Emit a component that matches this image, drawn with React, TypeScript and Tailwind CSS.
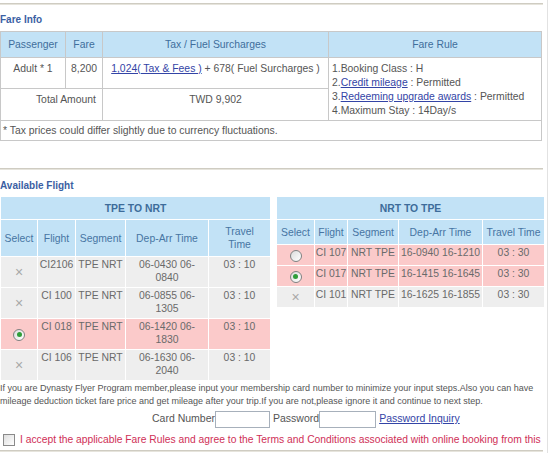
import React from 'react';

type Flight = {
  sel: 'x' | 'on' | 'off';
  flight: string;
  seg: string;
  time: string[];
  travel: string;
};

const outbound: Flight[] = [
  { sel: 'x', flight: 'CI2106', seg: 'TPE NRT', time: ['06-0430 06-', '0840'], travel: '03 : 10' },
  { sel: 'x', flight: 'CI 100', seg: 'TPE NRT', time: ['06-0855 06-', '1305'], travel: '03 : 10' },
  { sel: 'on', flight: 'CI 018', seg: 'TPE NRT', time: ['06-1420 06-', '1830'], travel: '03 : 10' },
  { sel: 'x', flight: 'CI 106', seg: 'TPE NRT', time: ['06-1630 06-', '2040'], travel: '03 : 10' },
];

const inbound: Flight[] = [
  { sel: 'off', flight: 'CI 107', seg: 'NRT TPE', time: ['16-0940 16-1210'], travel: '03 : 30' },
  { sel: 'on', flight: 'CI 017', seg: 'NRT TPE', time: ['16-1415 16-1645'], travel: '03 : 30' },
  { sel: 'x', flight: 'CI 101', seg: 'NRT TPE', time: ['16-1625 16-1855'], travel: '03 : 30' },
];

const Radio = ({ checked }: { checked?: boolean }) => (
  <span className="inline-flex h-[12px] w-[12px] items-center justify-center rounded-full border border-[#808080] bg-linear-to-br from-[#dcdcdc] to-white align-middle">
    {checked && <span className="h-[5px] w-[5px] rounded-full bg-[#2f9e3a]" />}
  </span>
);

const SelectCell = ({ sel }: { sel: Flight['sel'] }) => {
  if (sel === 'x') return <span className="text-[14px] leading-none text-[#a8a8a8]">×</span>;
  return <Radio checked={sel === 'on'} />;
};

const Separator = () => <div className="h-[2px] w-[543px] border-t border-[#cfccc2] bg-[#e6e4dc]" />;

const FlightTable = ({
  title,
  rows,
  widths,
  wrapTravel,
}: {
  title: string;
  rows: Flight[];
  widths: number[];
  wrapTravel?: boolean;
}) => (
  <table className="table-fixed border-collapse text-[10.4px] leading-[13px]">
    <colgroup>
      {widths.map((w, i) => (
        <col key={i} style={{ width: w }} />
      ))}
    </colgroup>
    <thead>
      <tr className="h-[23px] bg-[#c2e2f6]">
        <th colSpan={5} className="border border-white text-center font-bold text-[#3d6c9a]">
          {title}
        </th>
      </tr>
      <tr className={`${wrapTravel ? 'h-[37px]' : 'h-[25px]'} bg-[#c2e2f6] text-[#4775a3]`}>
        <th className="border border-white font-normal">Select</th>
        <th className="border border-white font-normal">Flight</th>
        <th className="border border-white font-normal">Segment</th>
        <th className="border border-white font-normal">Dep-Arr Time</th>
        <th className="border border-white font-normal">
          {wrapTravel ? (
            <>
              Travel
              <br />
              Time
            </>
          ) : (
            'Travel Time'
          )}
        </th>
      </tr>
    </thead>
    <tbody className="text-[#6a6a6a]">
      {rows.map((r) => (
        <tr
          key={r.flight}
          className={`${wrapTravel ? 'h-[31px]' : 'h-[21px]'} ${r.sel === 'x' ? 'bg-[#eeeeee]' : 'bg-[#fbcaca]'}`}
        >
          <td className="border border-white text-center align-middle">
            <SelectCell sel={r.sel} />
          </td>
          <td className="border border-white pt-[1px] text-center align-top whitespace-nowrap">{r.flight}</td>
          <td className="border border-white pt-[1px] text-center align-top whitespace-nowrap">{r.seg}</td>
          <td className="border border-white pt-[1px] text-center align-top whitespace-nowrap">
            {r.time.map((t, i) => (
              <div key={i}>{t}</div>
            ))}
          </td>
          <td className="border border-white pt-[1px] text-center align-top">{r.travel}</td>
        </tr>
      ))}
    </tbody>
  </table>
);

export default function App() {
  return (
    <div className="h-[453px] w-[548px] overflow-hidden border-r border-[#e2e2e2] bg-white font-['Liberation_Sans',Arial,sans-serif] text-[10.4px] text-[#555555]">
      <div className="pt-[3px]">
        <Separator />
      </div>

      {/* Fare info */}
      <div className="mt-[8px] mb-[4px] h-[14px] text-[10px] font-bold leading-[14px] text-[#3b5fa3]">Fare Info</div>
      <table className="w-[541px] table-fixed border-collapse border border-[#bdbdbd] leading-[14px]">
        <colgroup>
          <col style={{ width: 65 }} />
          <col style={{ width: 37 }} />
          <col style={{ width: 226 }} />
          <col style={{ width: 213 }} />
        </colgroup>
        <thead>
          <tr className="h-[26px] bg-[#c2e2f6] text-[#3f6e9c]">
            <th className="border border-[#c8c8c8] font-normal">Passenger</th>
            <th className="border border-[#c8c8c8] font-normal">Fare</th>
            <th className="border border-[#c8c8c8] font-normal">Tax / Fuel Surcharges</th>
            <th className="border border-[#c8c8c8] font-normal">Fare Rule</th>
          </tr>
        </thead>
        <tbody>
          <tr className="h-[31px]">
            <td className="border border-[#c8c8c8] pt-[4px] text-center align-top">Adult * 1</td>
            <td className="border border-[#c8c8c8] pt-[4px] text-center align-top">8,200</td>
            <td className="border border-[#c8c8c8] pt-[4px] text-center align-top whitespace-nowrap">
              <a className="text-[#3344a6] underline">1,024( Tax &amp; Fees )</a> + 678( Fuel Surcharges )
            </td>
            <td rowSpan={2} className="border border-[#c8c8c8] pt-[4px] pl-[3px] align-top whitespace-nowrap">
              <div>1.Booking Class : H</div>
              <div>
                2.<a className="text-[#3344a6] underline">Credit mileage</a> : Permitted
              </div>
              <div>
                3.<a className="text-[#3344a6] underline">Redeeming upgrade awards</a> : Permitted
              </div>
              <div>4.Maximum Stay : 14Day/s</div>
            </td>
          </tr>
          <tr className="h-[32px]">
            <td colSpan={2} className="border border-[#c8c8c8] pt-[4px] pr-[6px] text-right align-top">
              Total Amount
            </td>
            <td className="border border-[#c8c8c8] pt-[4px] text-center align-top">TWD 9,902</td>
          </tr>
          <tr className="h-[20px]">
            <td colSpan={4} className="border border-[#c8c8c8] pl-[2px] align-middle">
              * Tax prices could differ slightly due to currency fluctuations.
            </td>
          </tr>
        </tbody>
      </table>

      <div className="mt-[27px]">
        <Separator />
      </div>

      {/* Available flight */}
      <div className="mt-[9px] mb-[3px] h-[14px] text-[10px] font-bold leading-[14px] text-[#3b5fa3]">Available Flight</div>
      <div className="flex items-start gap-[5px]">
        <FlightTable title="TPE TO NRT" rows={outbound} widths={[37, 38, 50, 83, 62]} wrapTravel />
        <FlightTable title="NRT TO TPE" rows={inbound} widths={[38, 33, 51, 84, 62]} />
      </div>

      <p className="mt-[1px] w-[545px] text-[9px] leading-[13px] whitespace-nowrap text-[#555555]">
        If you are Dynasty Flyer Program member,please input your membership card number to minimize your input steps.Also you can have
        <br />
        mileage deduction ticket fare price and get mileage after your trip.If you are not,please ignore it and continue to next step.
      </p>

      <div className="mt-[1px] flex h-[20px] items-center pl-[152px] text-[10.5px] text-[#555555]">
        <span>Card Number</span>
        <input className="h-[17px] w-[55px] border border-[#a7b0bb] bg-white" />
        <span className="ml-[3px]">Password</span>
        <input className="h-[17px] w-[57px] border border-[#a7b0bb] bg-white" />
        <a className="ml-[3px] text-[#3344a6] underline">Password Inquiry</a>
      </div>

      <div className="mt-[1px] flex h-[19px] items-center text-[10.3px] text-[#cf2f57]">
        <span className="ml-[3px] mr-[5px] h-[12px] w-[12px] shrink-0 border border-[#8a8a8a] bg-linear-to-br from-[#dedede] to-white" />
        <span className="whitespace-nowrap">
          I accept the applicable Fare Rules and agree to the Terms and Conditions associated with online booking from this
        </span>
      </div>
      <div className="mt-[1px]">
        <Separator />
      </div>
    </div>
  );
}
